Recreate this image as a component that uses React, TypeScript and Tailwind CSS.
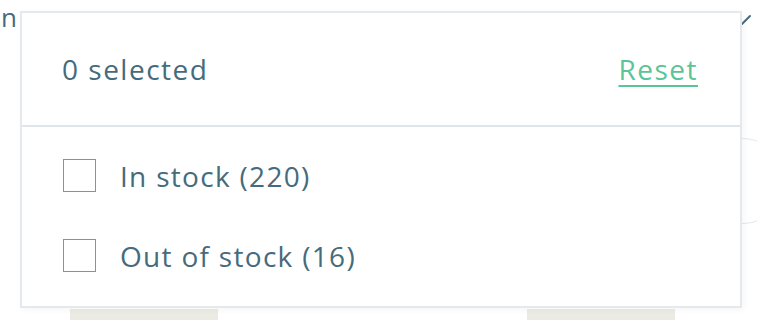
export default function App() {
  const options = [
    { label: "In stock (220)" },
    { label: "Out of stock (16)" },
  ];

  return (
    <div className="relative w-[757px] h-[320px] overflow-hidden bg-white font-['Open_Sans',sans-serif] text-[#466b7c]">
      {/* page behind the dropdown */}
      <span className="absolute left-[1px] top-[4px] text-[26px] leading-none">n</span>
      <svg className="absolute left-[736px] top-[12px]" width="20" height="16" viewBox="0 0 20 16">
        <path d="M6 12 L14 4" stroke="#466b7c" strokeWidth="2" strokeLinecap="round" fill="none" />
      </svg>
      <div className="absolute left-[700px] top-[138px] w-[86px] h-[86px] rounded-full border border-[#e3e8eb]" />
      <div className="absolute left-[70px] top-[309px] w-[148px] h-[20px] bg-[#ebeae3]" />
      <div className="absolute left-[527px] top-[309px] w-[148px] h-[20px] bg-[#ebeae3]" />

      {/* dropdown panel */}
      <div className="absolute left-[20px] top-[11px] w-[722px] h-[297px] bg-white border-2 border-[#e4e9ed] shadow-[2px_2px_6px_rgba(0,0,0,0.04)] flex flex-col">
        <div className="h-[114px] flex items-center justify-between pl-[40px] pr-[42px] border-b-2 border-[#dfe5e9]">
          <span className="text-[28px] tracking-[1.5px]">0 selected</span>
          <button className="text-[28px] tracking-[1.5px] text-[#5bc499] underline decoration-2 underline-offset-[5px]">
            Reset
          </button>
        </div>
        <div className="flex flex-col gap-[47px] pt-[32px] pl-[41px]">
          {options.map((o) => (
            <label key={o.label} className="flex items-center gap-[24px] h-[33px]">
              <span className="w-[33px] h-[33px] border-[1.5px] border-[#7d97a2] bg-white" />
              <span className="text-[28px] tracking-[1.3px]">{o.label}</span>
            </label>
          ))}
        </div>
      </div>
    </div>
  );
}
